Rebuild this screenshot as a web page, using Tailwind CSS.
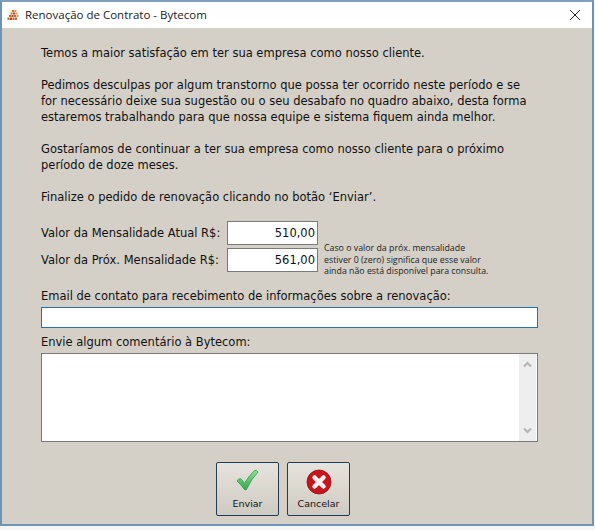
<!DOCTYPE html>
<html><head><meta charset="utf-8"><script src="https://cdn.jsdelivr.net/npm/@tailwindcss/browser@4"></script></head>
<body class="bg-[#f4f6f8] w-[595px] h-[530px] overflow-hidden font-['DejaVu_Sans',sans-serif] text-[#111]">
<div class="w-[594px] h-[526px] border-2 border-[#6f93b5] border-t-[#7fa0bd] flex flex-col">
  <div class="h-[26px] bg-white flex items-center pl-[5px] shrink-0">
    <svg width="13" height="13" viewBox="0 0 13 13" class="mr-[5px]"><g fill="#c8642a"><rect x="5" y="1" width="2" height="2"/><rect x="7.5" y="1" width="2" height="2" fill="#e0975f"/><rect x="3.5" y="3.5" width="2" height="2"/><rect x="6" y="3.5" width="2" height="2" fill="#a8401f"/><rect x="8.5" y="3.5" width="2" height="2" fill="#e0975f"/><rect x="2" y="6" width="2" height="2"/><rect x="4.5" y="6" width="2" height="2" fill="#a8401f"/><rect x="7" y="6" width="2" height="2"/><rect x="9.5" y="6" width="2" height="2" fill="#e0975f"/><rect x="0.5" y="8.5" width="2" height="2.5"/><rect x="3" y="8.5" width="2" height="2.5" fill="#a8401f"/><rect x="5.5" y="8.5" width="2" height="2.5"/><rect x="8" y="8.5" width="2" height="2.5"/></g></svg>
    <span class="text-[11.5px] font-['Open_Sans',sans-serif] text-[#222]">Renovação de Contrato - Bytecom</span>
    <svg width="12" height="12" viewBox="0 0 12 12" class="ml-auto mr-[11px]"><path d="M1 1L11 11M11 1L1 11" stroke="#222" stroke-width="1"/></svg>
  </div>
  <div class="flex-1 bg-[#d4d0c8] pl-[39px] pt-[17px] flex flex-col text-[11.5px] leading-[16px] whitespace-nowrap">
    <p>Temos a maior satisfação em ter sua empresa como nosso cliente.</p>
    <p class="mt-[16px]">Pedimos desculpas por algum transtorno que possa ter ocorrido neste período e se<br>for necessário deixe sua sugestão ou o seu desabafo no quadro abaixo, desta forma<br>estaremos trabalhando para que nossa equipe e sistema fiquem ainda melhor.</p>
    <p class="mt-[16px]">Gostaríamos de continuar a ter sua empresa como nosso cliente para o próximo<br>período de doze meses.</p>
    <p class="mt-[16px]">Finalize o pedido de renovação clicando no botão ‘Enviar’.</p>
    <div class="mt-[16px] flex h-[51px]">
      <div class="flex flex-col gap-[3px] w-[186px]">
        <div class="h-[24px] flex items-center">Valor da Mensalidade Atual R$:</div>
        <div class="h-[24px] flex items-center">Valor da Próx. Mensalidade R$:</div>
      </div>
      <div class="flex flex-col gap-[3px] w-[91px]">
        <div class="h-[24px] w-[91px] bg-white border border-[#7a7a7a] flex items-center justify-end pr-[2px]">510,00</div>
        <div class="h-[24px] w-[91px] bg-white border border-[#7a7a7a] flex items-center justify-end pr-[2px]">561,00</div>
      </div>
      <div class="ml-[6px] mt-[22px] text-[8.8px] leading-[11.5px] font-['Open_Sans',sans-serif] text-[#222]">Caso o valor da próx. mensalidade<br>estiver 0 (zero) significa que esse valor<br>ainda não está disponível para consulta.</div>
    </div>
    <p class="mt-[16px]">Email de contato para recebimento de informações sobre a renovação:</p>
    <div class="mt-[3px] h-[21px] w-[497px] bg-white border border-[#2f6f9f] shrink-0"></div>
    <p class="mt-[6px]">Envie algum comentário à Bytecom:</p>
    <div class="mt-[3px] h-[89px] w-[497px] bg-white border border-[#7a7a7a] shrink-0 flex justify-end">
      <div class="w-[17px] bg-[#eeeeee] flex flex-col justify-between items-center py-[7px] mr-px">
        <svg width="9" height="7" viewBox="0 0 9 7"><path d="M1 5.5L4.5 2L8 5.5" fill="none" stroke="#b4b4b4" stroke-width="2"/></svg>
        <svg width="9" height="7" viewBox="0 0 9 7"><path d="M1 1.5L4.5 5L8 1.5" fill="none" stroke="#b4b4b4" stroke-width="2"/></svg>
      </div>
    </div>
    <div class="mt-[20px] flex gap-[8px] ml-[175px]">
      <div class="w-[63px] h-[54px] rounded-[2px] border border-[#1f3d57] bg-linear-to-b from-[#e6e3dc] to-[#cfcbc3] flex flex-col items-center justify-end pb-[4px]">
        <svg width="26" height="26" viewBox="0 0 26 26" class="mb-[2px]"><defs><linearGradient id="g" x1="0" y1="0" x2="0" y2="1"><stop offset="0" stop-color="#8fe09a"/><stop offset="1" stop-color="#2fa84e"/></linearGradient></defs><path d="M2 12Q3.5 9.5 5.5 9.5L9.5 14Q14 7 19.5 1.5Q22 1 23 3Q16 10 11.5 20.5Q10 21.5 9 20Q6 15.5 2 12Z" fill="url(#g)" stroke="#2c9a4a" stroke-width="0.8"/></svg>
        <span class="text-[9.5px] leading-[14px]">Enviar</span>
      </div>
      <div class="w-[63px] h-[54px] rounded-[2px] border border-[#1f3d57] bg-linear-to-b from-[#e6e3dc] to-[#cfcbc3] flex flex-col items-center justify-end pb-[4px]">
        <svg width="26" height="26" viewBox="0 0 26 26" class="mb-[2px]"><circle cx="13" cy="13" r="12" fill="#c8141c" stroke="#8e0e14" stroke-width="0.8"/><path d="M8.5 8.5L17.5 17.5M17.5 8.5L8.5 17.5" stroke="#fbeeee" stroke-width="4.5" stroke-linecap="round"/></svg>
        <span class="text-[9.5px] leading-[14px]">Cancelar</span>
      </div>
    </div>
  </div>
</div>
</body></html>
